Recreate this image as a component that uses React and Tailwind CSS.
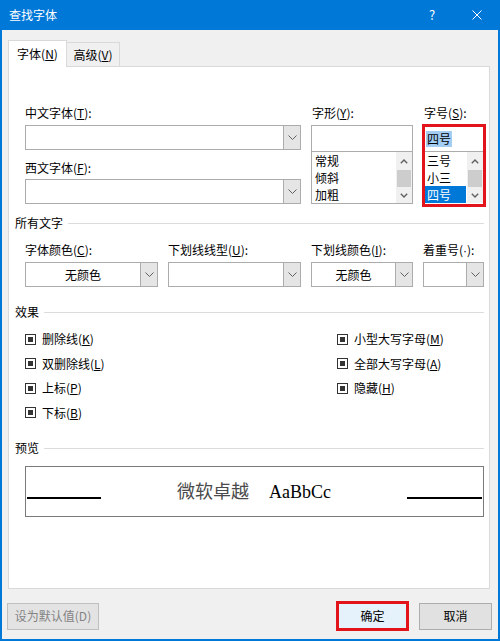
import React from 'react'

const Chevron = () => (
  <svg width="9" height="5" viewBox="0 0 9 5" fill="none">
    <path d="M0.5 0.5L4.5 4.5L8.5 0.5" stroke="#606060" />
  </svg>
)

const ArrowUp = () => (
  <svg width="8" height="5" viewBox="0 0 8 5" fill="none">
    <path d="M0.8 4.2L4 1L7.2 4.2" stroke="#606060" strokeWidth="1.4" />
  </svg>
)

const ArrowDown = () => (
  <svg width="8" height="5" viewBox="0 0 8 5" fill="none">
    <path d="M0.8 0.8L4 4L7.2 0.8" stroke="#606060" strokeWidth="1.4" />
  </svg>
)

const Label = ({ children, className = '' }) => (
  <div className={`h-[16px] whitespace-nowrap leading-[16px] ${className}`}>{children}</div>
)

const Combo = ({ className = '', text }) => (
  <div className={`flex h-[25px] border border-[#acacac] bg-white ${className}`}>
    <div className="flex flex-1 items-center justify-center">{text}</div>
    <div className="flex w-[17px] items-center justify-center border-l border-[#acacac] bg-[#e5e5e5]">
      <Chevron />
    </div>
  </div>
)

const ScrollBar = () => (
  <div className="flex w-[16px] flex-col bg-[#f0f0f0]">
    <div className="flex h-[18px] items-center justify-center">
      <ArrowUp />
    </div>
    <div className="mx-px h-[17px] bg-[#cdcdcd]" />
    <div className="flex h-[16px] items-center justify-center">
      <ArrowDown />
    </div>
  </div>
)

const Section = ({ title }) => (
  <div className="flex h-[16px] items-center">
    <span className="leading-[16px]">{title}</span>
    <div className="ml-[5px] h-px flex-1 bg-[#dcdcdc]" />
  </div>
)

const Check = ({ children }) => (
  <div className="flex h-[24.5px] items-center gap-[6px]">
    <span className="flex h-[11px] w-[11px] items-center justify-center border border-[#333]">
      <span className="h-[5px] w-[5px] bg-[#333]" />
    </span>
    <span className="leading-[16px]">{children}</span>
  </div>
)

export default function App() {
  return (
    <div className="flex h-[641px] w-[500px] flex-col border-x-2 border-b-2 border-[#0078d7] bg-[#f0f0f0] font-['Noto_Sans_CJK_SC',sans-serif] text-[12px] leading-[16px] text-black">
      {/* title bar */}
      <div className="flex h-[30px] shrink-0 items-center bg-[#0078d7] pl-[7px] text-white">
        <span className="text-[12px]">查找字体</span>
        <div className="ml-auto flex h-full">
          <div className="flex w-[46px] items-center justify-center text-[13px]">?</div>
          <div className="flex w-[43px] items-center justify-center">
            <svg width="10" height="10" viewBox="0 0 10 10" fill="none">
              <path d="M0.5 0.5L9.5 9.5M9.5 0.5L0.5 9.5" stroke="#fff" strokeWidth="1" />
            </svg>
          </div>
        </div>
      </div>

      {/* tabs */}
      <div className="ml-[6px] mt-[10px] flex h-[26px] items-end">
        <div className="relative z-10 mb-[-1px] flex h-[27px] w-[59px] items-center justify-center border border-b-0 border-[#d9d9d9] bg-white pb-px">
          字体(<u>N</u>)
        </div>
        <div className="flex h-[24px] w-[53px] items-center justify-center border border-b-0 border-l-0 border-[#d9d9d9] bg-[#f0f0f0]">
          高级(<u>V</u>)
        </div>
      </div>

      {/* tab panel */}
      <div className="ml-[6px] mr-[8px] h-[523px] shrink-0 border border-[#d9d9d9] bg-white pl-[6px] pr-[5px] pt-[38px]">
        <div className="ml-[10px] flex items-start">
          <div className="w-[276px] shrink-0">
            <Label className="mb-[4px]">中文字体(<u>T</u>):</Label>
            <Combo />
            <Label className="mb-[3px] mt-[10px]">西文字体(<u>F</u>):</Label>
            <Combo />
          </div>
          <div className="ml-[10px] w-[102px] shrink-0">
            <Label className="mb-[4px] ml-px">字形(<u>Y</u>):</Label>
            <div className="h-[27px] border border-[#acacac] bg-white" />
            <div className="flex h-[52px] border border-t-0 border-[#acacac] bg-white">
              <div className="flex-1 pl-[3px]">
                <div className="h-[17px] leading-[17px]">常规</div>
                <div className="h-[17px] leading-[17px]">倾斜</div>
                <div className="h-[17px] leading-[17px]">加粗</div>
              </div>
              <ScrollBar />
            </div>
          </div>
          <div className="ml-[9px] w-[64px] shrink-0">
            <Label className="mb-[3px] ml-[2px]">字号(<u>S</u>):</Label>
            <div className="h-[83px] border-[3px] border-[#e3131b] bg-white">
              <div className="flex h-[25px] items-center border-b border-[#acacac] pl-px">
                <span className="bg-[#a3cdf2] px-px leading-[16px]">四号</span>
              </div>
              <div className="flex">
                <div className="w-[41px]">
                  <div className="h-[17px] pl-[2px] leading-[17px]">三号</div>
                  <div className="h-[17px] pl-[2px] leading-[17px]">小三</div>
                  <div className="h-[17px] bg-[#0078d7] pl-[2px] leading-[17px] text-white">四号</div>
                </div>
                <div className="ml-px">
                  <ScrollBar />
                </div>
              </div>
            </div>
          </div>
        </div>

        <div className="mt-[8px]">
          <Section title="所有文字" />
        </div>
        <div className="ml-[10px] mt-[11px] flex">
          <div className="w-[133px] shrink-0">
            <Label className="mb-[4px]">字体颜色(<u>C</u>):</Label>
            <Combo text="无颜色" />
          </div>
          <div className="ml-[10px] w-[133px] shrink-0">
            <Label className="mb-[4px]">下划线线型(<u>U</u>):</Label>
            <Combo />
          </div>
          <div className="ml-[10px] w-[102px] shrink-0">
            <Label className="mb-[4px]">下划线颜色(<u>I</u>):</Label>
            <Combo text="无颜色" />
          </div>
          <div className="ml-[10px] w-[61px] shrink-0">
            <Label className="mb-[4px]">
              着重号(<span className="font-['Liberation_Sans',sans-serif]">·</span>):
            </Label>
            <Combo />
          </div>
        </div>

        <div className="mt-[17px]">
          <Section title="效果" />
        </div>
        <div className="ml-[10px] mt-[7px] flex">
          <div className="w-[312px] shrink-0">
            <Check>删除线(<u>K</u>)</Check>
            <Check>双删除线(<u>L</u>)</Check>
            <Check>上标(<u>P</u>)</Check>
            <Check>下标(<u>B</u>)</Check>
          </div>
          <div>
            <Check>小型大写字母(<u>M</u>)</Check>
            <Check>全部大写字母(<u>A</u>)</Check>
            <Check>隐藏(<u>H</u>)</Check>
          </div>
        </div>

        <div className="mt-[15px]">
          <Section title="预览" />
        </div>
        <div className="ml-[10px] mt-[10px] flex h-[51px] items-start justify-between border border-[#7a7a7a] px-px">
          <div className="mt-[30px] h-[2px] w-[74px] bg-black" />
          <div className="mt-[16px] whitespace-nowrap font-['Liberation_Serif','Noto_Sans_CJK_SC',serif] text-[18px] leading-[18px]">
            <span className="text-[#4a4a4a]">微软卓越</span>
            <span className="ml-[20px]">AaBbCc</span>
          </div>
          <div className="mt-[30px] h-[2px] w-[75px] bg-black" />
        </div>
      </div>

      {/* buttons */}
      <div className="mt-[12px] flex h-[30px] items-center pl-[5px] pr-[6px]">
        <div className="flex h-[27px] w-[92px] items-center justify-center border border-[#bfbfbf] bg-[#e3e3e3] text-[#838383]">
          设为默认值(D)
        </div>
        <div className="ml-auto flex h-[30px] w-[73px] items-center justify-center border-[3px] border-[#e3131b] bg-[#e5f1fb]">
          确定
        </div>
        <div className="ml-[10px] flex h-[27px] w-[73px] items-center justify-center border border-[#adadad] bg-[#e1e1e1]">
          取消
        </div>
      </div>
    </div>
  )
}
